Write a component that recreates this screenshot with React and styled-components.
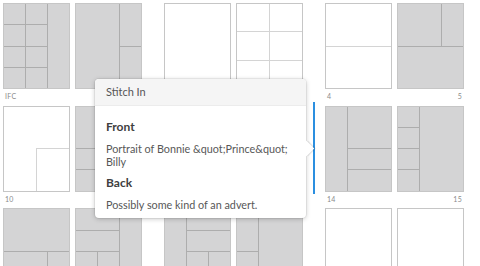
import React from 'react';
import styled, { createGlobalStyle } from 'styled-components';

const GlobalStyle = createGlobalStyle`
  html, body {
    margin: 0;
    padding: 0;
    background: #fff;
  }
  body {
    font-family: Lato, 'Open Sans', sans-serif;
  }
`;

const Board = styled.div`
  position: relative;
  width: 480px;
  height: 266px;
  overflow: hidden;
  padding: 3px 0 0 3px;
  box-sizing: border-box;
`;

const SpreadGrid = styled.div`
  display: grid;
  grid-template-columns: repeat(3, 139px);
  grid-auto-rows: 102.5px;
  column-gap: 22px;
`;

const Spread = styled.div`
  position: relative;
  display: grid;
  grid-template-columns: 67px 67px;
  grid-template-rows: 86px 1fr;
  column-gap: 5px;
  &::before {
    content: '';
    display: ${p => (p.$insertBefore ? 'block' : 'none')};
    position: absolute;
    left: -12px;
    top: -4px;
    width: 2px;
    height: 92px;
    background: #2b8fe0;
  }
`;

const Page = styled.div`
  display: grid;
  box-sizing: border-box;
  border: 1px solid #c6c6c6;
  gap: 1px;
  background: ${p => (p.$shade ? '#adadad' : '#d4d4d4')};
  grid-template-columns: ${p => p.$cols};
  grid-template-rows: ${p => p.$rows};
  grid-template-areas: ${p => p.$areas};
`;

const Frame = styled.div`
  grid-area: ${p => p.$area};
  background: ${p => (p.$shade ? '#d4d4d5' : '#fff')};
  margin-top: ${p => (p.$joinUp ? '-1px' : '0')};
`;

const Labels = styled.div`
  grid-column: 1 / -1;
  display: flex;
  justify-content: space-between;
  padding: 3px 2px 0;
  font-size: 7px;
  line-height: 9px;
  color: #8a8a8a;
  letter-spacing: 0.3px;
`;

const Popover = styled.div`
  position: absolute;
  left: 95px;
  top: 79px;
  width: 211px;
  background: #fff;
  border-radius: 4px;
  box-shadow: 0 1px 5px rgba(0, 0, 0, 0.22), 0 0 0 1px rgba(0, 0, 0, 0.05);
`;

const PopoverTitle = styled.div`
  height: 26px;
  padding: 0 11px;
  background: #f5f5f5;
  border-bottom: 1px solid #ececec;
  border-radius: 4px 4px 0 0;
  font-size: 11px;
  line-height: 26px;
  color: #555;
`;

const PopoverBody = styled.div`
  position: relative;
  padding: 13px 11px 6px;
`;

const SideHeading = styled.h4`
  margin: 0;
  font-size: 12px;
  font-weight: 700;
  line-height: 16px;
  color: #404040;
`;

const SideText = styled.p`
  margin: 8px 0 7px;
  font-size: 10.8px;
  line-height: 12.7px;
  color: #575757;
  &:last-child {
    margin-bottom: 0;
  }
`;

const Arrow = styled.span`
  position: absolute;
  right: -6px;
  top: 64px;
  width: 11px;
  height: 11px;
  background: #fff;
  transform: rotate(45deg);
  box-shadow: 1px -1px 1px rgba(0, 0, 0, 0.13);
`;

const one = { cols: '1fr', rows: '1fr', areas: '"a"' };

const spreads = [
  {
    labels: ['IFC', '1'],
    pages: [
      { shade: true, cols: '1fr 1fr 1fr', rows: 'repeat(4, 1fr)', areas: '"a b r" "c d r" "e f r" "g h r"' },
      { shade: true, cols: '2fr 1fr', rows: '1fr 1fr', areas: '"a b" "a c"' },
    ],
  },
  {
    labels: ['2', '3'],
    pages: [
      one,
      { cols: '1fr 1fr', rows: 'repeat(3, 1fr)', areas: '"a b" "c d" "e f"' },
    ],
  },
  {
    labels: ['4', '5'],
    pages: [
      { cols: '1fr', rows: '1fr 1fr', areas: '"a" "b"' },
      { shade: true, cols: '2fr 1fr', rows: '1fr 1fr', areas: '"a b" "c c"' },
    ],
  },
  {
    labels: ['10', '11'],
    pages: [
      { cols: '1fr 1fr', rows: '1fr 1fr', areas: '"a a" "c b"', joinUp: 'c' },
      { shade: true, cols: '1fr 2fr', rows: '2fr 1fr 1fr', areas: '"a r" "b r" "c r"' },
    ],
  },
  {
    labels: ['12', '13'],
    pages: [
      one,
      { shade: true, cols: '1fr 1fr', rows: '1fr 1fr', areas: '"a b" "c d"' },
    ],
  },
  {
    labels: ['14', '15'],
    insertBefore: true,
    pages: [
      { shade: true, cols: '1fr 2fr', rows: '2fr 1fr 1fr', areas: '"l a" "l b" "l c"' },
      { shade: true, cols: '1fr 2fr', rows: 'repeat(4, 1fr)', areas: '"a r" "b r" "c r" "d r"' },
    ],
  },
  {
    pages: [
      { shade: true, cols: '2fr 1fr', rows: '1fr 1fr', areas: '"a a" "b c"' },
      { shade: true, cols: '1fr 1fr 1fr', rows: '1fr 1fr 2fr', areas: '"a a r" "b b r" "c d r"' },
    ],
  },
  {
    pages: [
      { shade: true, cols: '1fr 1fr 1fr', rows: '1fr 1fr 2fr', areas: '"l a a" "l b b" "l c d"' },
      { shade: true, cols: '1fr 2fr', rows: '1fr 1fr', areas: '"a r" "b r"' },
    ],
  },
  {
    pages: [one, one],
  },
];

const frameNames = areas => [...new Set(areas.replace(/"/g, ' ').split(/\s+/).filter(Boolean))];

const PageThumb = ({ layout }) => (
  <Page $shade={layout.shade} $cols={layout.cols} $rows={layout.rows} $areas={layout.areas}>
    {frameNames(layout.areas).map(name => (
      <Frame key={name} $area={name} $shade={layout.shade} $joinUp={layout.joinUp === name} />
    ))}
  </Page>
);

const App = () => {
  return (
    <Board>
      <GlobalStyle />
      <SpreadGrid>
        {spreads.map((spread, i) => (
          <Spread key={i} $insertBefore={spread.insertBefore}>
            <PageThumb layout={spread.pages[0]} />
            <PageThumb layout={spread.pages[1]} />
            {spread.labels && (
              <Labels>
                <span>{spread.labels[0]}</span>
                <span>{spread.labels[1]}</span>
              </Labels>
            )}
          </Spread>
        ))}
      </SpreadGrid>

      <Popover>
        <PopoverTitle>Stitch In</PopoverTitle>
        <PopoverBody>
          <SideHeading>Front</SideHeading>
          <SideText>Portrait of Bonnie &amp;quot;Prince&amp;quot; Billy</SideText>
          <SideHeading>Back</SideHeading>
          <SideText>Possibly some kind of an advert.</SideText>
        </PopoverBody>
        <Arrow />
      </Popover>
    </Board>
  );
};

export default App;
